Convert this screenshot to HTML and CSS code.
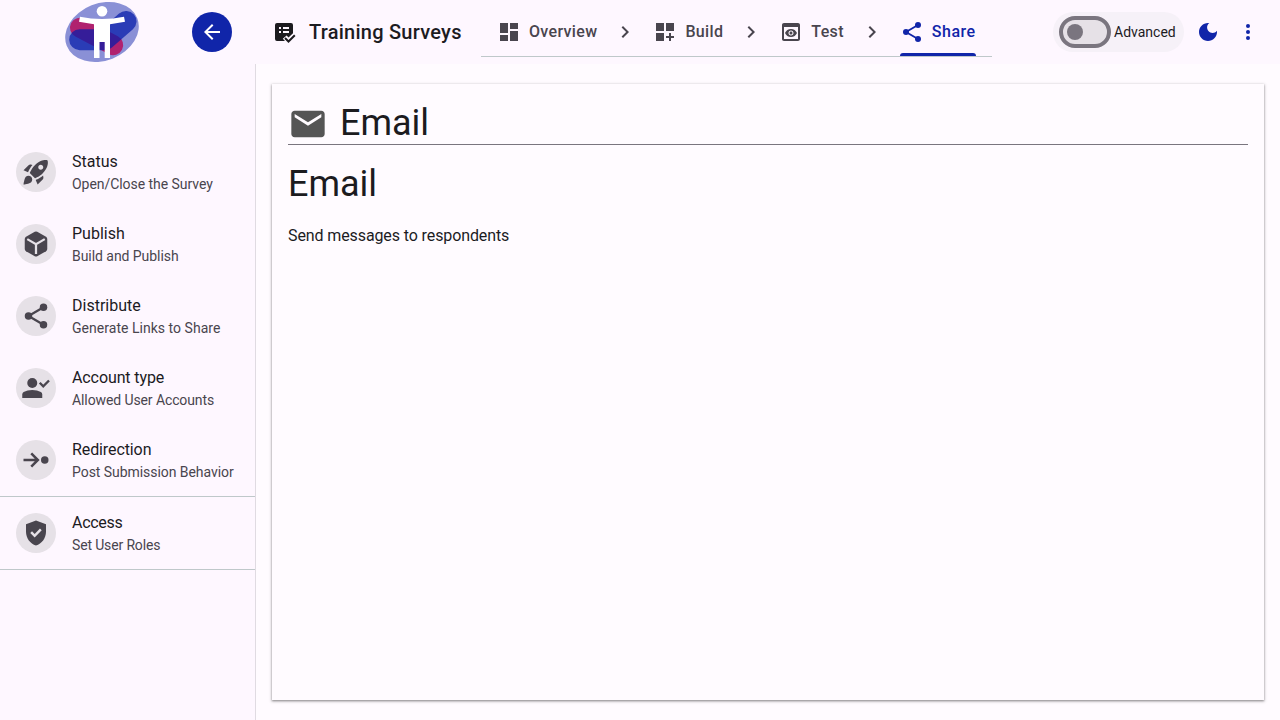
FILE: index.html
```html
<!DOCTYPE html>
<html lang="en">
<head>
<meta charset="utf-8">
<title>Training Surveys</title>
<link rel="stylesheet" href="styles.css">
</head>
<body>
<header class="toolbar">
  <div class="brand">
    <svg class="logo" viewBox="0 0 76 64">
      <ellipse cx="38" cy="32" rx="37.9" ry="28.6" transform="rotate(-21.4 38 32)" fill="#8a90d6"/>
      <path d="M16 27.7 49.2 45.2" stroke="#b0226f" stroke-width="20" stroke-linecap="round"/>
      <path d="M15.700 39.700H41L62 21.400" fill="none" stroke="#051ca9" stroke-opacity=".72" stroke-width="21" stroke-linecap="round" stroke-linejoin="round"/>
      <circle cx="38" cy="11.300" r="5.300" fill="#fff"/>
      <path d="M16 16.700Q38 21.500 60 16.700L61 21.800 46 24.300V58H40.700V42H35.500V58H30V24.300L15 21.800Z" fill="#fff"/>
    </svg>
    <button class="back"><svg class="icon" viewBox="0 0 24 24"><path d="M20 11H7.830l5.590-5.590L12 4l-8 8 8 8 1.410-1.410L7.830 13H20z"/></svg></button>
  </div>
  <h1 class="project">
    <svg class="icon" viewBox="0 0 24 24"><path fill-rule="evenodd" d="M5 3h14a2 2 0 0 1 2 2v8.200l-4.500 4.200-1.900-1.900-3.800 3.300 2.200 2.200H5a2 2 0 0 1-2-2V5a2 2 0 0 1 2-2zm2 4v2h2V7zm4 0v2h6V7zm-4 4v2h2v-2zm4 0v2h6v-2z"/><path d="m13 18 3.500 3.500L22.800 15.300" fill="none" stroke="currentColor" stroke-width="2"/></svg>
    Training Surveys
  </h1>
  <nav class="tabs">
    <a class="tab"><svg class="icon" viewBox="0 0 24 24"><path d="M3 13h8V3H3v10zm0 8h8v-6H3v6zm10 0h8V11h-8v10zm0-18v6h8V3h-8z"/></svg>Overview</a>
    <svg class="icon" viewBox="0 0 24 24"><path d="M10 6 8.590 7.410 13.170 12l-4.580 4.590L10 18l6-6z"/></svg>
    <a class="tab"><svg class="icon" viewBox="0 0 24 24"><path d="M3 3h8v8H3zM13 3h8v8h-8zM3 13h8v8H3zM18 13h-2v3h-3v2h3v3h2v-3h3v-2h-3z"/></svg>Build</a>
    <svg class="icon" viewBox="0 0 24 24"><path d="M10 6 8.590 7.410 13.170 12l-4.580 4.590L10 18l6-6z"/></svg>
    <a class="tab"><svg class="icon" viewBox="0 0 24 24"><path d="M19 3H5c-1.110 0-2 .9-2 2v14c0 1.100.89 2 2 2h14c1.100 0 2-.9 2-2V5c0-1.100-.89-2-2-2zm0 16H5V7h14v12zm-5.500-6c0 .83-.67 1.500-1.500 1.500s-1.500-.67-1.500-1.500.67-1.500 1.500-1.500 1.500.67 1.500 1.500zM12 9c-2.730 0-5.060 1.660-6 4 .94 2.340 3.270 4 6 4s5.060-1.660 6-4c-.94-2.340-3.270-4-6-4zm0 6.500c-1.380 0-2.500-1.120-2.500-2.500s1.120-2.500 2.500-2.500 2.500 1.120 2.500 2.500-1.120 2.500-2.500 2.500z"/></svg>Test</a>
    <svg class="icon" viewBox="0 0 24 24"><path d="M10 6 8.590 7.410 13.170 12l-4.580 4.590L10 18l6-6z"/></svg>
    <a class="tab active"><svg class="icon" viewBox="0 0 24 24"><path d="M18 5 6 12l12 7" fill="none" stroke="currentColor" stroke-width="1.800"/><circle cx="18" cy="5" r="3"/><circle cx="6" cy="12" r="3"/><circle cx="18" cy="19" r="3"/></svg>Share</a>
  </nav>
  <div class="actions">
    <label class="advanced"><span class="switch"><span class="thumb"></span></span>Advanced</label>
    <button class="action"><svg class="icon" viewBox="0 0 24 24"><path d="M12 3c-4.970 0-9 4.030-9 9s4.030 9 9 9 9-4.030 9-9c0-.46-.04-.92-.1-1.360-.98 1.370-2.580 2.260-4.400 2.260-2.980 0-5.400-2.420-5.400-5.400 0-1.810.89-3.420 2.260-4.400C12.920 3.040 12.460 3 12 3z"/></svg></button>
    <button class="action"><svg class="icon" viewBox="0 0 24 24"><circle cx="12" cy="6" r="2"/><circle cx="12" cy="12" r="2"/><circle cx="12" cy="18" r="2"/></svg></button>
  </div>
</header>
<div class="layout">
  <aside class="sidebar">
    <a class="item"><span class="avatar"><svg class="glyph" viewBox="0 0 24 24"><path d="M9.190 6.350c-2.040 2.290-3.440 5.580-3.570 5.890L2 10.690l4.050-4.050c.47-.47 1.150-.68 1.810-.55l1.330.26zM11.170 17s3.740-1.550 5.890-3.700c5.400-5.400 4.500-9.620 4.210-10.570-.95-.3-5.170-1.190-10.570 4.210C8.550 9.090 7 12.830 7 12.830L11.170 17zm6.480-2.190c-2.290 2.040-5.580 3.440-5.890 3.570L13.310 22l4.050-4.050c.47-.47.68-1.150.55-1.810l-.26-1.330zM9 18c0 .83-.34 1.580-.88 2.120C6.940 21.300 2 22 2 22s.7-4.940 1.880-6.120C4.420 15.340 5.170 15 6 15c1.660 0 3 1.340 3 3zm4.800-9.800c0-1.100.9-2 2-2s2 .9 2 2-.9 2-2 2-2-.9-2-2z"/></svg></span><span class="text"><span class="title">Status</span><span class="sub">Open/Close the Survey</span></span></a>
    <a class="item"><span class="avatar"><svg class="glyph" viewBox="0 0 24 24"><path d="M11 2.200q1-.5 2 0l7 4q1 .6 1 1.750v8.050q0 1.150-1 1.750l-7 4q-1 .5-2 0l-7-4Q3 17.150 3 16V7.950Q3 6.800 4 6.200z"/><path d="M5 8.100 12 12.150 19 8.100M12 12v8" fill="none" stroke="#e6e1e7" stroke-width="1.800"/></svg></span><span class="text"><span class="title">Publish</span><span class="sub">Build and Publish</span></span></a>
    <a class="item"><span class="avatar"><svg class="glyph" viewBox="0 0 24 24"><path d="M18 5 6 12l12 7" fill="none" stroke="currentColor" stroke-width="1.800"/><circle cx="18" cy="5" r="3"/><circle cx="6" cy="12" r="3"/><circle cx="18" cy="19" r="3"/></svg></span><span class="text"><span class="title">Distribute</span><span class="sub wide">Generate Links to Share</span></span></a>
    <a class="item"><span class="avatar"><svg class="glyph" viewBox="0 0 24 24"><circle cx="9" cy="8" r="4"/><path d="M1 20v-2.800q0-1.250 1.100-2Q5 13.600 9 13.600t6.900 1.600q1.100.75 1.100 2V20z"/><path d="m15 7.800 2.800 2.800L22.400 6" fill="none" stroke="currentColor" stroke-width="1.900"/></svg></span><span class="text"><span class="title tight">Account type</span><span class="sub tight">Allowed User Accounts</span></span></a>
    <a class="item"><span class="avatar"><svg class="glyph" viewBox="0 0 24 24"><path d="M2 12h10.500M8.200 6.700l5.300 5.300-5.300 5.300" fill="none" stroke="currentColor" stroke-width="2"/><circle cx="19" cy="12" r="3"/></svg></span><span class="text"><span class="title tight">Redirection</span><span class="sub">Post Submission Behavior</span></span></a>
    <hr class="divider">
    <a class="item"><span class="avatar"><svg class="glyph" viewBox="0 0 24 24"><path fill-rule="evenodd" d="M12 2 4 5v6.090c0 5.050 3.410 9.760 8 10.910 4.590-1.150 8-5.860 8-10.910V5l-8-3zM10.940 15.540 7.400 12l1.410-1.410 2.120 2.120 4.240-4.240 1.410 1.410-5.640 5.660z"/></svg></span><span class="text"><span class="title tighter">Access</span><span class="sub tighter">Set User Roles</span></span></a>
    <hr class="divider">
  </aside>
  <main class="content">
    <section class="card">
      <div class="card-head"><svg class="mail" viewBox="0 0 24 24"><path d="M20 4H4c-1.100 0-1.990.9-1.990 2L2 18c0 1.100.9 2 2 2h16c1.100 0 2-.9 2-2V6c0-1.100-.9-2-2-2zm0 4-8 5-8-5V6l8 5 8-5v2z"/></svg><span>Email</span></div>
      <h2 class="heading">Email</h2>
      <p class="desc">Send messages to respondents</p>
    </section>
  </main>
</div>
</body>
</html>
```
FILE: styles.css
```css
* { box-sizing: border-box; }
body { margin: 0; height: 720px; overflow: hidden; display: flex; flex-direction: column; background: #fffbff; color: #1c1b1f; font-family: Roboto, sans-serif; }
button { border: 0; padding: 0; background: none; display: grid; place-items: center; }
svg { display: block; flex: none; fill: currentColor; }
.icon { width: 24px; height: 24px; }

.toolbar { height: 64px; flex: none; display: flex; align-items: center; background: #fef7ff; }
.brand { width: 256px; padding: 0 24px 0 64px; display: flex; align-items: center; justify-content: space-between; }
.logo { width: 76px; height: 64px; }
.back { width: 40px; height: 40px; border-radius: 50%; background: #1025a9; color: #fff; }
.project { width: 225px; margin: 0; padding-left: 16px; display: flex; align-items: center; gap: 12px; font-size: 20px; font-weight: 500; letter-spacing: 0.25px; white-space: nowrap; }
.project .icon { margin-right: 1px; }
.tabs { align-self: flex-start; width: 511px; height: 57px; padding: 7px 16px 0; display: flex; align-items: center; gap: 16px; border-bottom: 1px solid #bfc8ca; color: #49454e; }
.tab { position: relative; height: 49px; display: flex; align-items: center; gap: 8px; font-size: 16px; font-weight: 500; letter-spacing: 0.34px; }
.active { color: #1025a9; flex: 1; letter-spacing: 0.5px; }
.active::after { content: ""; position: absolute; left: 0; right: 0; bottom: 0; height: 3px; border-radius: 3px 3px 0 0; background: #1025a9; }
.actions { margin-left: auto; padding-right: 12px; display: flex; align-items: center; color: #1025a9; }
.action { width: 40px; height: 40px; color: inherit; }
.advanced { width: 131px; height: 40px; margin-right: 4px; padding-left: 6px; display: flex; align-items: center; gap: 3px; border-radius: 20px; background: #f6f1f8; color: #1c1b1f; font-size: 14px; }
.switch { width: 52px; height: 32px; padding: 0 4px; display: flex; align-items: center; border: 4px solid #7a757f; border-radius: 16px; background: #e6e1e7; }
.thumb { width: 16px; height: 16px; border-radius: 50%; background: #7a757f; }

.layout { flex: 1; display: flex; min-height: 0; }
.sidebar { width: 256px; flex: none; padding-top: 72px; border-right: 1px solid #e0dbe2; background: #fef7ff; }
.item { height: 72px; padding-left: 16px; display: flex; align-items: center; gap: 16px; }
.avatar { width: 40px; height: 40px; display: grid; place-items: center; border-radius: 50%; background: #e6e1e7; color: #49454e; }
.glyph { width: 30px; height: 30px; }
.text { display: flex; flex-direction: column; white-space: nowrap; }
.title { font-size: 16px; line-height: 24px; }
.sub { font-size: 14px; line-height: 20px; color: #49454e; letter-spacing: -0.05px; }
.sub.wide { letter-spacing: 0.03px; }
.tight, .sub.tight { letter-spacing: -0.1px; }
.tighter, .sub.tighter { letter-spacing: -0.15px; }
.title.tighter { letter-spacing: -0.3px; }
.divider { height: 1px; margin: 0; border: 0; background: #bfc8ca; }

.content { flex: 1; padding: 20px 16px; display: flex; }
.card { flex: 1; padding: 16px; background: #fffbff; box-shadow: 0 1px 2px rgba(0,0,0,.38), 0 1px 3px 1px rgba(0,0,0,.12); }
.card-head { height: 45px; display: flex; align-items: center; gap: 12px; border-bottom: 1px solid #7a757f; font-size: 36px; line-height: 44px; padding-top: 2px; }
.mail { width: 40px; height: 40px; color: #555; position: relative; top: 1px; }
.heading { margin: 17px 0 18px; font-size: 36px; line-height: 44px; font-weight: 400; }
.desc { margin: 0; font-size: 16px; line-height: 24px; letter-spacing: -0.107px; }
```
